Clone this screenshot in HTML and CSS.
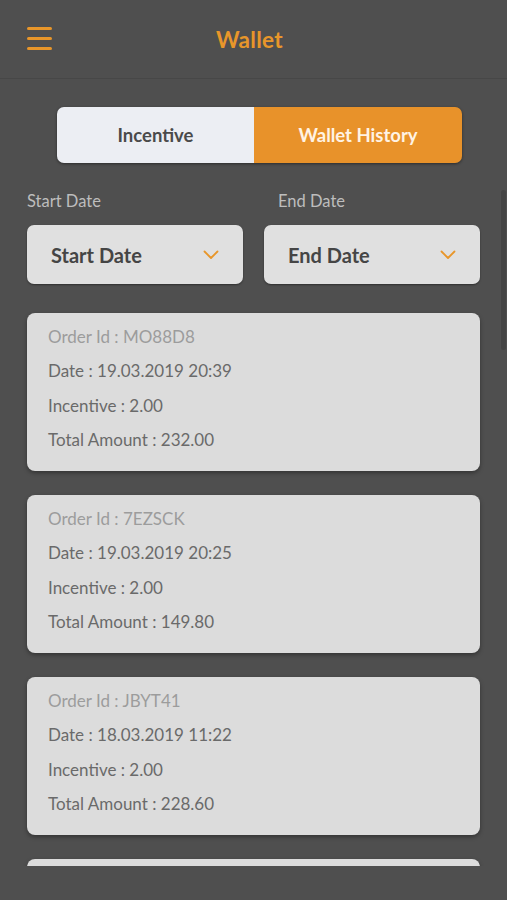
FILE: index.html
```html
<!DOCTYPE html>
<html>
<head>
<meta charset="utf-8">
<link rel="stylesheet" href="styles.css">
</head>
<body>
<header class="topbar">
  <div class="menu"><span></span><span></span><span></span></div>
  <h1 class="title">Wallet</h1>
</header>
<main class="content">
  <div class="segment">
    <div class="seg seg-off">Incentive</div>
    <div class="seg seg-on">Wallet History</div>
  </div>
  <div class="filters">
    <div class="filter">
      <div class="flabel">Start Date</div>
      <div class="select"><span>Start Date</span>
        <svg width="16" height="10" viewBox="0 0 16 10"><path d="M1.5 1.5 L8 8 L14.5 1.5" fill="none" stroke="#e8962a" stroke-width="1.8" stroke-linecap="round" stroke-linejoin="round"/></svg>
      </div>
    </div>
    <div class="filter">
      <div class="flabel flabel-end">End Date</div>
      <div class="select"><span>End Date</span>
        <svg width="16" height="10" viewBox="0 0 16 10"><path d="M1.5 1.5 L8 8 L14.5 1.5" fill="none" stroke="#e8962a" stroke-width="1.8" stroke-linecap="round" stroke-linejoin="round"/></svg>
      </div>
    </div>
  </div>
  <div class="cards">
    <div class="card">
      <div class="oid">Order Id : MO88D8</div>
      <div>Date : 19.03.2019 20:39</div>
      <div>Incentive : 2.00</div>
      <div>Total Amount : 232.00</div>
    </div>
    <div class="card">
      <div class="oid">Order Id : 7EZSCK</div>
      <div>Date : 19.03.2019 20:25</div>
      <div>Incentive : 2.00</div>
      <div>Total Amount : 149.80</div>
    </div>
    <div class="card">
      <div class="oid">Order Id : JBYT41</div>
      <div>Date : 18.03.2019 11:22</div>
      <div>Incentive : 2.00</div>
      <div>Total Amount : 228.60</div>
    </div>
    <div class="card"></div>
  </div>
  <div class="scrollbar"></div>
</main>
</body>
</html>
```

FILE: styles.css
```css
* { box-sizing: border-box; }
html, body { margin: 0; padding: 0; }
body {
  background: #4f4f4f;
  font-family: Lato, "Noto Sans", sans-serif;
  width: 507px;
  height: 900px;
  overflow: hidden;
}
.topbar {
  height: 79px;
  border-bottom: 1px solid #474747;
  position: relative;
  display: flex;
  align-items: center;
  justify-content: center;
}
.menu {
  position: absolute;
  left: 27px;
  top: 27px;
  width: 25px;
  display: flex;
  flex-direction: column;
  gap: 7px;
}
.menu span {
  display: block;
  height: 3px;
  border-radius: 2px;
  background: #e8962a;
}
.title {
  margin: 0;
  color: #e8962a;
  font-size: 22.5px;
  font-weight: 700;
  letter-spacing: 0.3px;
  padding-right: 8px;
}
.content {
  position: relative;
  height: 787px;
  overflow: hidden;
  padding: 0 27px;
}
.segment {
  margin: 28px 18px 0 30px;
  height: 56px;
  display: flex;
  border-radius: 7px;
  overflow: hidden;
  box-shadow: 0 1px 3px rgba(0,0,0,0.45);
}
.seg {
  display: flex;
  align-items: center;
  justify-content: center;
  font-size: 18.5px;
  font-weight: 700;
}
.seg-off { width: 197px; background: #eceef3; color: #4a4a4a; }
.seg-on { flex: 1; background: #e8922a; color: #fff3e4; }
.filters {
  display: flex;
  gap: 21px;
  margin-top: 27px;
}
.filter { flex: 1; }
.flabel {
  color: #bdbdbd;
  font-size: 16.5px;
  height: 22px;
  line-height: 22px;
}
.flabel-end { padding-left: 14px; }
.select {
  margin-top: 13px;
  height: 59px;
  background: #e0e0e0;
  border-radius: 7px;
  display: flex;
  align-items: center;
  justify-content: space-between;
  padding: 0 24px 0 24px;
  box-shadow: 0 1px 2px rgba(0,0,0,0.4);
}
.select span {
  font-size: 20px;
  font-weight: 700;
  color: #454545;
}
.cards {
  margin-top: 29px;
  display: flex;
  flex-direction: column;
  gap: 24px;
}
.card {
  background: #dcdcdc;
  border-radius: 8px;
  height: 158px;
  flex-shrink: 0;
  padding: 7px 21px 0;
  color: #6a6a6a;
  font-size: 17px;
  line-height: 34.4px;
  box-shadow: 0 2px 4px rgba(0,0,0,0.35);
}
.card .oid { color: #9c9c9c; }
.scrollbar {
  position: absolute;
  right: 1px;
  top: 111px;
  width: 5px;
  height: 160px;
  background: #444444;
  border-radius: 3px;
}
```
